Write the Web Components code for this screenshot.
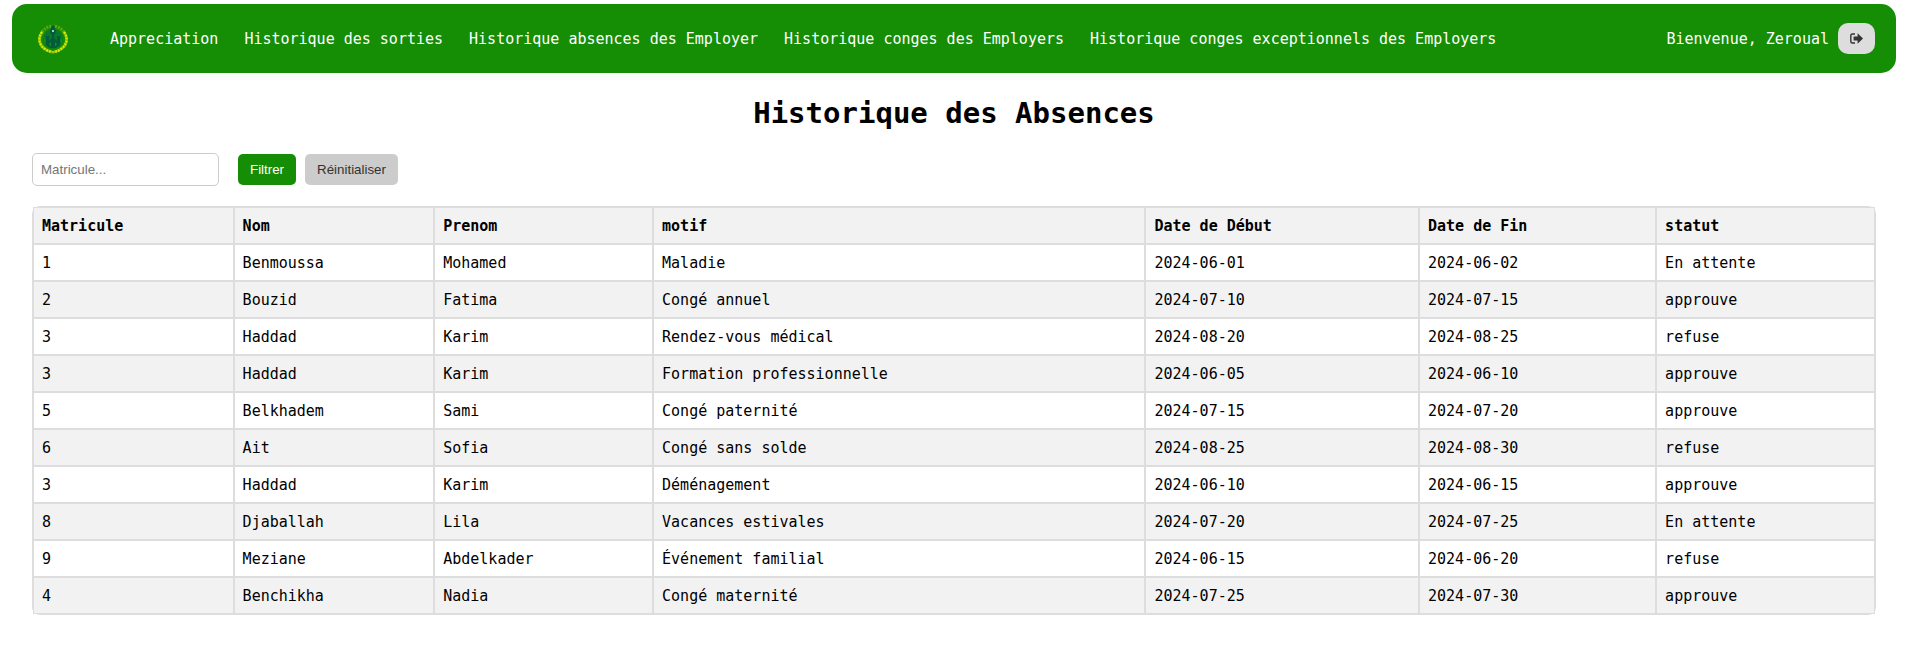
<!DOCTYPE html>
<html lang="fr">
<head>
<meta charset="utf-8">
<meta name="viewport" content="width=device-width, initial-scale=1">
<title>Historique des Absences</title>
<style>
  body {
    margin: 0;
    background: #fff;
    color: #000;
    font: 15px/19px "DejaVu Sans Mono", monospace;
    --green: #158d05;
    --line: #ddd;
    --stripe: #f2f2f2;
  }
</style>
</head>
<body>
<absences-page></absences-page>

<script>
  class BaseElement extends HTMLElement {
    constructor() {
      super();
      const template = document.createElement('template');
      template.innerHTML = this.constructor.markup;
      this.attachShadow({ mode: 'open' }).append(template.content.cloneNode(true));
    }
  }

  /* Emblem: two wheat branches round a green figure */
  customElements.define('site-logo', class extends BaseElement {
    static markup = `
      <style>
        :host { display: block; width: 30px; height: 30px; }
        svg { display: block; width: 100%; height: 100%; }
      </style>
      <svg viewBox="0 0 30 30" aria-hidden="true">
        <path d="M4 8C7 4 11 2 15 2s8 2 11 6" fill="none" stroke="#5da80a" stroke-width="3" stroke-dasharray="2 1"/>
        <circle cx="15" cy="15" r="10" fill="#08792b"/>
        <path d="M4 8C-1 15 2 22 7 25c2 2 4 2 7 3M26 8c5 7 2 14-3 17-2 2-4 2-7 3" fill="none" stroke="#6fb406" stroke-width="3"/>
        <path d="M4 8C-1 15 2 22 7 25c2 2 4 2 7 3M26 8c5 7 2 14-3 17-2 2-4 2-7 3" fill="none" stroke="#dfea00" stroke-width="2.200" stroke-dasharray="2 1"/>
        <path d="M15 0l2 4 1 4-2 3h-2l-2-3 1-4zM8 12h3v5l3-3v-3h2v3l3 3v-5h3v9l-4 3h-6l-4-3z" fill="#045a3d"/>
        <path d="M11 20l2-2v5zM19 20l-2-2v5zM6 13l2 4-2 3zM24 13l-2 4 2 3z" fill="#178f13"/>
        <circle cx="15" cy="7" r="1" fill="#e4f4ea"/>
        <path d="M13 27h4l-2 3z" fill="#a8d000"/>
      </svg>`;
  });

  customElements.define('nav-link', class extends BaseElement {
    static markup = `
      <style>
        :host { display: block; }
        a { color: #fff; text-decoration: none; white-space: nowrap; }
        a:hover { text-decoration: underline; }
      </style>
      <a href="#"><slot></slot></a>`;
    connectedCallback() {
      this.shadowRoot.querySelector('a').href = this.getAttribute('to') || '#';
    }
  });

  customElements.define('logout-button', class extends BaseElement {
    static markup = `
      <style>
        :host { display: block; }
        button { display: flex; align-items: center; justify-content: center; padding: 9px 12px;
                 border: 0; border-radius: 10px; background: #ddd; color: #333; cursor: pointer; }
        svg { display: block; width: 13px; height: 13px; }
      </style>
      <button type="button" aria-label="Déconnexion">
        <svg viewBox="0 0 13 13" aria-hidden="true">
          <path d="M5 2H2.500Q.800 2 .800 3.800v5.400Q.800 11 2.500 11H5" fill="none" stroke="#333" stroke-width="1.400"/>
          <path d="M3.600 4.400H7.600V1.200L13 6.500 7.600 11.800V8.600H3.600z" fill="#333"/>
        </svg>
      </button>`;
  });

  customElements.define('site-nav', class extends BaseElement {
    static markup = `
      <style>
        :host { display: block; margin: 4px 10px 0 12px; }
        nav { display: flex; align-items: center; padding: 19px 21px 19px 26px;
              border-radius: 15px; background: var(--green); color: #fff; }
        .links { display: flex; gap: 26px; margin-left: 42px; }
        .links, ::slotted(span) { padding-top: 2px; }
        .user { display: flex; align-items: center; gap: 9px; margin-left: auto; white-space: nowrap; }
      </style>
      <nav>
        <site-logo></site-logo>
        <div class="links"><slot></slot></div>
        <div class="user"><slot name="user"></slot><logout-button></logout-button></div>
      </nav>`;
  });

  customElements.define('page-title', class extends BaseElement {
    static markup = `
      <style>
        :host { display: block; }
        h1 { margin: 0; padding-bottom: 2px; font-size: 29px; line-height: 36px; font-weight: bold; text-align: center; }
      </style>
      <h1><slot></slot></h1>`;
  });

  customElements.define('filter-bar', class extends BaseElement {
    static markup = `
      <style>
        :host { display: block; }
        form { display: flex; align-items: center; gap: 9px; margin: 0; }
        input, button { box-sizing: border-box; margin: 0; border-radius: 5px;
                        font-family: "Liberation Sans", sans-serif; line-height: 15px; }
        input { width: 187px; height: 33px; margin-right: 10px; padding: 8px; border: 1px solid #ccc; background: #fff; }
        input::placeholder { color: #757575; }
        button { padding: 8px 12px; border: 0; cursor: pointer; }
        .apply { background: var(--green); color: #fff; }
        .reset { background: #ccc; color: #333; }
      </style>
      <form>
        <input type="text" name="matricule" placeholder="Matricule..." aria-label="Matricule">
        <button class="apply" type="submit">Filtrer</button>
        <button class="reset" type="reset">Réinitialiser</button>
      </form>`;
    connectedCallback() {
      const send = value => this.dispatchEvent(new CustomEvent('filter', { detail: value }));
      const form = this.shadowRoot.querySelector('form');
      form.addEventListener('submit', e => { e.preventDefault(); send(form.elements.matricule.value.trim()); });
      form.addEventListener('reset', () => send(''));
    }
  });

  customElements.define('absences-table', class extends BaseElement {
    static markup = `
      <style>
        :host { display: block; }
        table { width: 100%; table-layout: fixed; border: 1px solid var(--line);
                border-radius: 8px; border-collapse: separate; border-spacing: 0; }
        th, td { padding: 9px 8px 7px; border: 1px solid var(--line); text-align: left; }
        th, tbody tr:nth-child(even) { background: var(--stripe); }
        .s { width: 110px; } .m { width: 120px; } .l { width: 270px; }
        .start { width: 150px; } .end { width: 130px; }
      </style>
      <table>
        <colgroup><col class="s"><col class="s"><col class="m"><col class="l"><col class="start"><col class="end"><col class="m"></colgroup>
        <thead>
          <tr><th>Matricule</th><th>Nom</th><th>Prenom</th><th>motif</th><th>Date de Début</th><th>Date de Fin</th><th>statut</th></tr>
        </thead>
        <tbody></tbody>
      </table>`;
    static records = [
      ['1', 'Benmoussa', 'Mohamed', 'Maladie', '2024-06-01', '2024-06-02', 'En attente'],
      ['2', 'Bouzid', 'Fatima', 'Congé annuel', '2024-07-10', '2024-07-15', 'approuve'],
      ['3', 'Haddad', 'Karim', 'Rendez-vous médical', '2024-08-20', '2024-08-25', 'refuse'],
      ['3', 'Haddad', 'Karim', 'Formation professionnelle', '2024-06-05', '2024-06-10', 'approuve'],
      ['5', 'Belkhadem', 'Sami', 'Congé paternité', '2024-07-15', '2024-07-20', 'approuve'],
      ['6', 'Ait', 'Sofia', 'Congé sans solde', '2024-08-25', '2024-08-30', 'refuse'],
      ['3', 'Haddad', 'Karim', 'Déménagement', '2024-06-10', '2024-06-15', 'approuve'],
      ['8', 'Djaballah', 'Lila', 'Vacances estivales', '2024-07-20', '2024-07-25', 'En attente'],
      ['9', 'Meziane', 'Abdelkader', 'Événement familial', '2024-06-15', '2024-06-20', 'refuse'],
      ['4', 'Benchikha', 'Nadia', 'Congé maternité', '2024-07-25', '2024-07-30', 'approuve']
    ];
    connectedCallback() { this.show(''); }
    show(matricule) {
      const body = this.shadowRoot.querySelector('tbody');
      body.replaceChildren();
      for (const record of this.constructor.records) {
        if (matricule && record[0] !== matricule) continue;
        const row = body.insertRow();
        for (const value of record) row.insertCell().textContent = value;
      }
    }
  });

  customElements.define('absences-page', class extends BaseElement {
    static markup = `
      <style>
        :host { display: flow-root; }
        main { display: flex; flex-direction: column; gap: 20px; padding: 22px 30px 44px 32px; }
      </style>
      <site-nav>
        <nav-link to="#appreciation">Appreciation</nav-link>
        <nav-link to="#sorties">Historique des sorties</nav-link>
        <nav-link to="#absences">Historique absences des Employer</nav-link>
        <nav-link to="#conges">Historique conges des Employers</nav-link>
        <nav-link to="#conges-exceptionnels">Historique conges exceptionnels des Employers</nav-link>
        <span slot="user">Bienvenue, Zeroual</span>
      </site-nav>
      <main>
        <page-title>Historique des Absences</page-title>
        <filter-bar></filter-bar>
        <absences-table></absences-table>
      </main>`;
    connectedCallback() {
      const table = this.shadowRoot.querySelector('absences-table');
      this.shadowRoot.querySelector('filter-bar').addEventListener('filter', e => table.show(e.detail));
    }
  });
</script>
</body>
</html>
